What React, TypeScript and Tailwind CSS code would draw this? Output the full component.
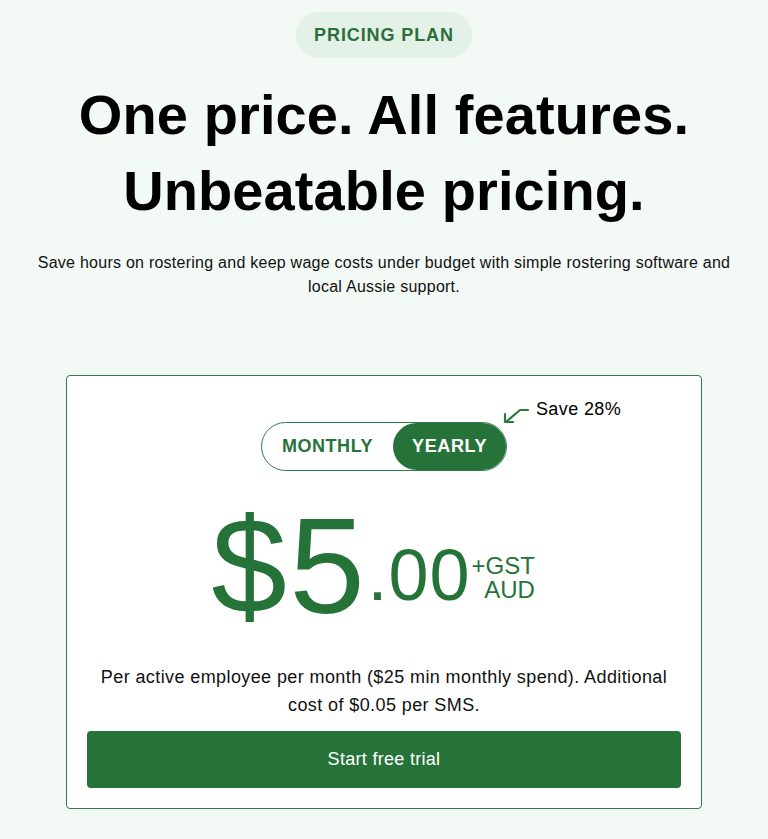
import { useState } from "react";

const ArrowIcon = () => (
  <svg width="26" height="16" viewBox="0 0 26 16" fill="none" stroke="#2b7a3f" strokeWidth={2.2} strokeLinecap="round" strokeLinejoin="round">
    <path d="M25 2 L17 2 L3 14" />
    <path d="M2 6 L2 14 L10 14" />
  </svg>
);

const App = () => {
  const [yearly, setYearly] = useState<boolean>(true);

  return (
    <div className="min-h-screen bg-[#f3f9f5] flex flex-col items-center font-['Liberation_Sans',Arial,sans-serif] text-[#111]">
      <div className="mt-3 h-[46px] px-[18px] rounded-full bg-[#e3f1e7] text-[#2a6e3b] text-[18px] font-bold tracking-wider leading-[46px]">
        PRICING PLAN
      </div>

      <h1 className="mt-[19px] text-center text-[56px] font-bold leading-[76px] tracking-[0.1px] text-black">
        One price. All features.
        <br />
        Unbeatable pricing.
      </h1>

      <p className="mt-[22px] max-w-[710px] text-center text-[16px] leading-[24px] tracking-[0.25px]">
        Save hours on rostering and keep wage costs under budget with simple rostering software and local Aussie support.
      </p>

      <div className="relative mt-[76px] w-[636px] rounded-[4px] border border-[#2e7d46] bg-white px-5 pt-[46px] pb-5 flex flex-col items-center">
        <div className="relative flex items-center rounded-full border border-[#2e7d46] bg-white">
          <button
            onClick={() => setYearly(false)}
            className={`h-[47px] px-5 rounded-full text-[18px] font-bold tracking-[0.55px] ${
              yearly ? "text-[#26733a]" : "bg-[#26733a] text-white"
            }`}
          >
            MONTHLY
          </button>
          <button
            onClick={() => setYearly(true)}
            className={`h-[47px] px-[19px] rounded-full text-[18px] font-bold tracking-[0.6px] ${
              yearly ? "bg-[#26733a] text-white" : "text-[#26733a]"
            }`}
          >
            YEARLY
          </button>
          <div className="absolute left-[241px] top-[-15px] flex items-center gap-[7px] whitespace-nowrap">
            <ArrowIcon />
            <span className="text-[18px] leading-[24px] -mt-[14px] tracking-[0.4px] text-black">Save 28%</span>
          </div>
        </div>

        <div className="mt-[27px] mr-[22px] flex items-end text-[#26733a]">
          <span className="text-[136px] leading-none tracking-[2.5px]">$5</span>
          <span className="mb-[23px] text-[72px] leading-none tracking-[1px]">.00</span>
          <span className="mb-[32px] ml-[1px] text-right text-[24px] leading-[24px]">
            +GST
            <br />
            AUD
          </span>
        </div>

        <p className="mt-[29px] px-[10px] text-center text-[18px] leading-[28px] tracking-[0.4px] text-[#111]">
          Per active employee per month ($25 min monthly spend). Additional cost of $0.05 per SMS.
        </p>

        <button className="mt-[12px] h-[57px] w-full rounded-[4px] bg-[#26733a] text-[18px] tracking-[0.3px] text-white">
          Start free trial
        </button>
      </div>
    </div>
  );
};

export default App;
